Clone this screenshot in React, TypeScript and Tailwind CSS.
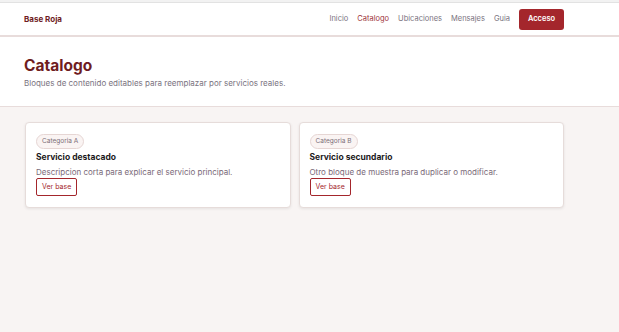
import React from "react";

const font = { fontFamily: "Inter, 'Liberation Sans', sans-serif" };

function Card({ tag, title, desc }: { tag: string; title: string; desc: string }) {
  return (
    <div className="flex-1 bg-white border border-[#e6dcda] rounded-[4px] shadow-[0_1px_3px_rgba(0,0,0,0.08)] px-[10px] pt-[11px] pb-[11px]">
      <div className="flex">
        <span className="text-[6.5px] leading-none text-[#7a6f78] bg-[#faf4f3] border border-[#e6d6d4] rounded-full px-[5px] py-[3px]">{tag}</span>
      </div>
      <div className="mt-[2px] text-[8.5px] leading-[12px] font-bold text-[#1c1a1c]">{title}</div>
      <div className="mt-[4px] text-[8px] leading-[11px] text-[#7a6a78]">{desc}</div>
      <div className="flex">
        <span className="text-[7px] leading-none text-[#a4262c] border border-[#a4262c] rounded-[2px] px-[5px] h-[18px] flex items-center">Ver base</span>
      </div>
    </div>
  );
}

export default function App() {
  return (
    <div className="w-[619px] h-[332px] bg-[#f8f4f3] overflow-hidden" style={font}>
      <div className="h-[3px] bg-[#f2f2f2] border-b border-[#e2e2e2]"></div>
      <header className="bg-white border-b-2 border-[#e8dcdb]">
        <div className="ml-6 w-[540px] h-[32px] flex items-center justify-between">
          <div className="text-[8px] font-bold text-[#6f1d1f]">Base Roja</div>
          <nav className="flex items-center gap-[9px] text-[7.5px] text-[#7a7380]">
            <span>Inicio</span>
            <span className="text-[#a0343c]">Catalogo</span>
            <span>Ubicaciones</span>
            <span>Mensajes</span>
            <span>Guia</span>
            <span className="bg-[#a4262c] text-white font-semibold rounded-[3px] w-[45px] h-[21px] flex items-center justify-center text-[7.5px]">Acceso</span>
          </nav>
        </div>
      </header>
      <section className="bg-white border-b border-[#e8dcdb]">
        <div className="ml-6 w-[540px] pt-[19px] pb-[17px]">
          <h1 className="text-[15.5px] leading-[20px] font-bold text-[#6f1d1f]">Catalogo</h1>
          <p className="mt-[2px] text-[8px] leading-[11px] text-[#7a7380]">Bloques de contenido editables para reemplazar por servicios reales.</p>
        </div>
      </section>
      <main className="ml-[25px] w-[539px] pt-[15px] flex gap-[8px]">
        <Card tag="Categoria A" title="Servicio destacado" desc="Descripcion corta para explicar el servicio principal." />
        <Card tag="Categoria B" title="Servicio secundario" desc="Otro bloque de muestra para duplicar o modificar." />
      </main>
    </div>
  );
}
